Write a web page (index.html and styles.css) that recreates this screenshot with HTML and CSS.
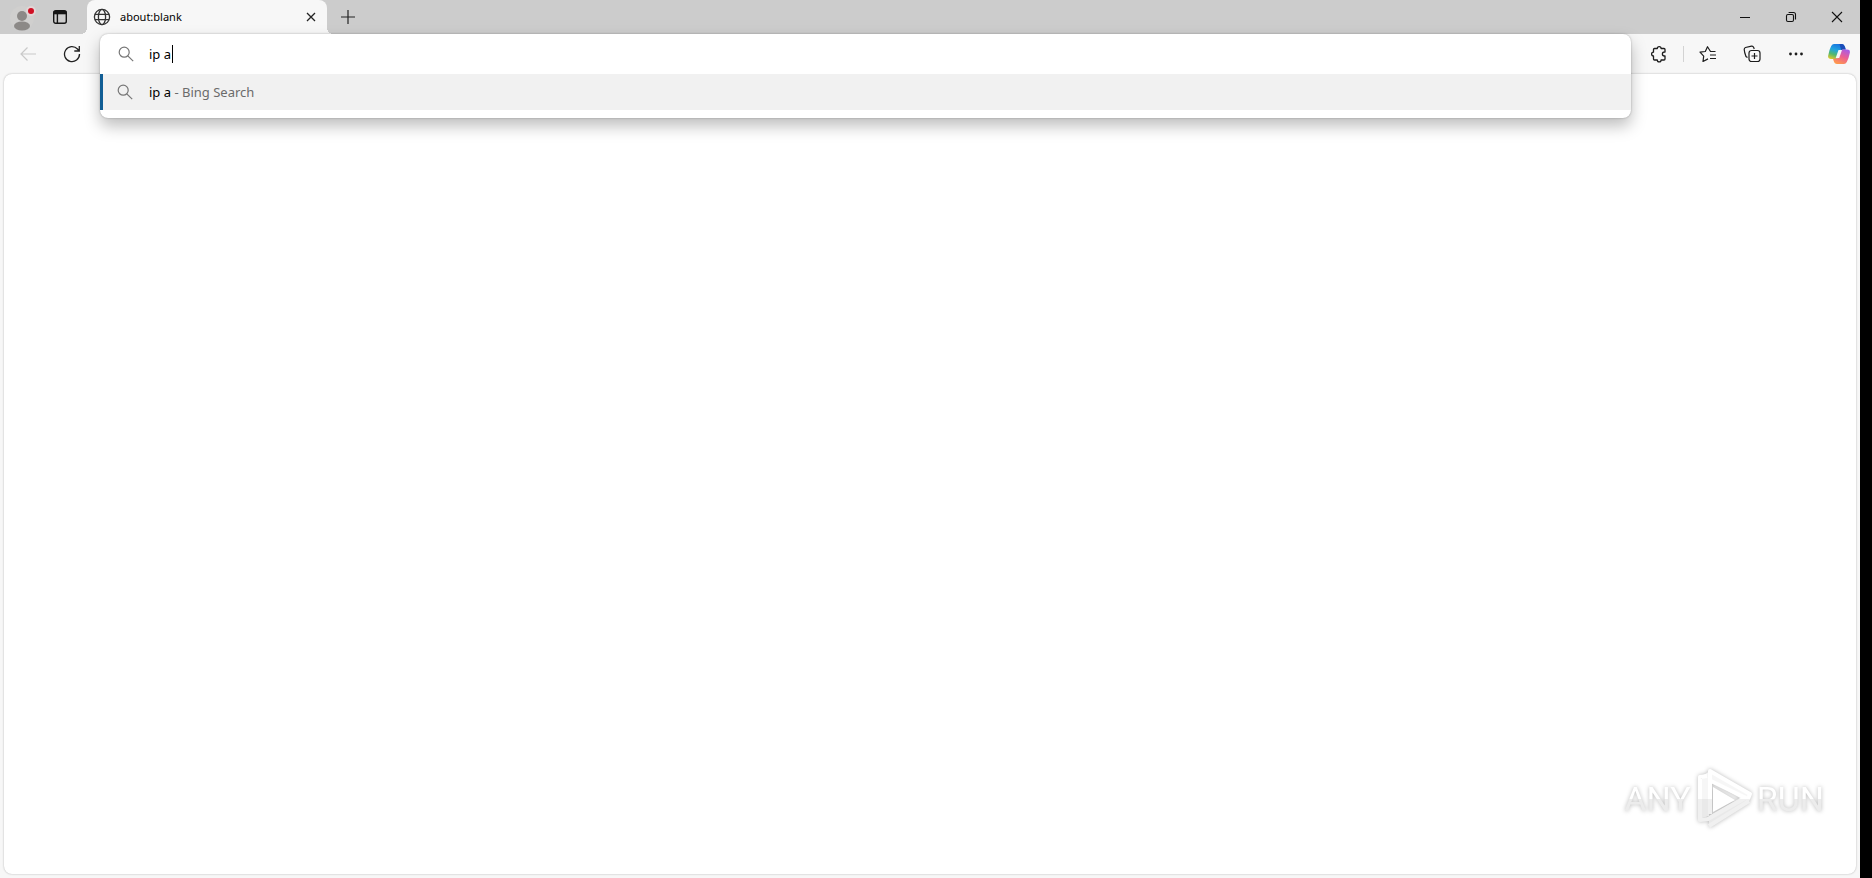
FILE: index.html
```html
<!DOCTYPE html>
<html lang="en">
<head>
<meta charset="utf-8">
<title>about:blank</title>
<link rel="stylesheet" href="styles.css">
</head>
<body>
<div class="window">
  <header class="tabstrip">
    <button class="profile" aria-label="Profile">
      <svg width="32" height="30" viewBox="0 0 32 30"><circle cx="16" cy="14" r="12" fill="#d0cfce"/><circle cx="16" cy="12" r="5" fill="#8c8987"/><ellipse cx="16" cy="22" rx="8" ry="4.500" fill="#8c8987"/><circle cx="25" cy="7" r="5" fill="#e2d5d5"/><circle cx="25" cy="7" r="3" fill="#d00f24"/></svg>
    </button>
    <button class="tab-actions" aria-label="Tab actions">
      <svg width="16" height="16" viewBox="0 0 16 16" fill="none" stroke="#151515" stroke-width="1.4"><rect x="1.7" y="1.7" width="12.6" height="12.6" rx="2"/><path d="M1.7 3.6h12.6" stroke-width="3.4"/><path d="M5.4 5v9"/></svg>
    </button>
    <div class="tab">
      <svg width="18" height="18" viewBox="0 0 18 18" fill="none" stroke="#333" stroke-width="1.3"><circle cx="9" cy="9" r="7.6"/><ellipse cx="9" cy="9" rx="3.6" ry="7.6"/><path d="M2 6.3h14M2 11.7h14"/></svg>
      <span class="tab-title">about:blank</span>
      <button class="tab-close" aria-label="Close tab"><svg width="10" height="10" viewBox="0 0 10 10" stroke="#222" stroke-width="1.3"><path d="M1 1l8 8M9 1L1 9"/></svg></button>
    </div>
    <button class="new-tab" aria-label="New tab"><svg width="14" height="14" viewBox="0 0 14 14" stroke="#222" stroke-width="1.2"><path d="M7 0v14M0 7h14"/></svg></button>
    <div class="window-controls">
      <button aria-label="Minimize"><svg width="12" height="12" viewBox="0 0 12 12" stroke="#111"><path d="M1 6.5h10"/></svg></button>
      <button aria-label="Restore"><svg width="12" height="12" viewBox="0 0 12 12" fill="none" stroke="#111" stroke-width="1.1"><rect x="1.5" y="3.5" width="7" height="7" rx="1.4"/><path d="M3.6 1.5h4.9a2 2 0 0 1 2 2v5"/></svg></button>
      <button aria-label="Close"><svg width="12" height="12" viewBox="0 0 12 12" stroke="#111" stroke-width="1.1"><path d="M1 1l10 10M11 1L1 11"/></svg></button>
    </div>
  </header>

  <nav class="toolbar">
    <button class="tool" aria-label="Back" disabled><svg width="18" height="16" viewBox="0 0 18 16" fill="none" stroke="#c9c9c9" stroke-width="1.2"><path d="M17 8H2M8.500 1.500L2 8l6.500 6.500"/></svg></button>
    <button class="tool" aria-label="Refresh"><svg width="18" height="18" viewBox="0 0 18 18" fill="none" stroke="#222" stroke-width="1.3"><path d="M16.500 9A7.500 7.500 0 1 1 14.500 4L16 5.700M16.300 1v5h-5"/></svg></button>
    <div class="address">
      <div class="popup">
        <label class="query">
          <svg width="16" height="16" viewBox="0 0 16 16" fill="none" stroke="#767676" stroke-width="1.2"><circle cx="6.200" cy="6.200" r="5"/><path d="M9.800 9.800l5.400 5.400"/></svg>
          <span class="field"><input type="text" value="ip a" aria-label="Address and search bar" spellcheck="false"><span class="caret"></span></span>
        </label>
        <button class="suggestion">
          <svg width="16" height="16" viewBox="0 0 16 16" fill="none" stroke="#767676" stroke-width="1.2"><circle cx="6.200" cy="6.200" r="5"/><path d="M9.800 9.800l5.400 5.400"/></svg>
          <span class="suggestion-text">ip a<span class="source"> - Bing Search</span></span>
        </button>
      </div>
    </div>
    <button class="tool" aria-label="Extensions"><svg width="18" height="18" viewBox="0 0 18 18" fill="none" stroke="#1c1c1c" stroke-width="1.3" stroke-linejoin="round"><path d="M4.500 3.500H7.300a1.900 1.900 0 0 1 3.800 0H14q1 0 1 1V7h-.6a2 2 0 0 0 0 4h.6v3q0 1-1 1h-2.900a1.900 1.900 0 0 1-3.800 0H4.500q-1 0-1-1V11a1.900 1.900 0 0 1 0-3.800V4.500q0-1 1-1z"/></svg></button>
    <span class="divider"></span>
    <button class="tool" aria-label="Favorites"><svg width="18" height="18" viewBox="0 0 18 18" fill="none" stroke="#1c1c1c" stroke-width="1.200" stroke-linejoin="round"><path d="M16.500 6.500h-5L8.500 1.700 6.300 6.500 1 7.200l3.700 3.900L4 16.500l5-2.600M11 10h6M11 13.500h6"/></svg></button>
    <button class="tool" aria-label="Collections"><svg width="18" height="18" viewBox="0 0 18 18" fill="none" stroke="#1c1c1c" stroke-width="1.200"><path d="M4.500 12.500L3 11.500Q1.300 7 1.200 4.500q0-1.500 1.300-2L8.500 1.200q1.500-.3 2.200 1.200l.5 1.600"/><rect x="6" y="5.500" width="11" height="11" rx="2.500"/><path d="M11.500 8v6M8.500 11h6"/></svg></button>
    <button class="tool" aria-label="Settings and more"><svg width="14" height="4" viewBox="0 0 14 4" fill="#1c1c1c"><circle cx="1.500" cy="2" r="1.400"/><circle cx="7" cy="2" r="1.400"/><circle cx="12.500" cy="2" r="1.400"/></svg></button>
    <button class="tool copilot" aria-label="Copilot">
      <svg width="22" height="20" viewBox="0 0 22 20">
        <defs>
          <linearGradient id="cool" x1=".6" y1="0" x2=".2" y2="1"><stop offset="0" stop-color="#1971df"/><stop offset=".4" stop-color="#20a4df"/><stop offset=".7" stop-color="#52b86f"/><stop offset="1" stop-color="#ddc72c"/></linearGradient>
          <linearGradient id="warm" x1=".8" y1="0" x2=".3" y2="1"><stop offset="0" stop-color="#a75be8"/><stop offset=".5" stop-color="#ed5f91"/><stop offset="1" stop-color="#ff9b4b"/></linearGradient>
        </defs>
        <path d="M6 0h8q2 0 3 3l.7 2.500H15q-2 0-2.700 2.200L10.500 13q-.8 2-3 2H3q-3.500 0-2.800-3.500Q1.500 5 3.200 2 4.300 0 6 0z" fill="url(#cool)"/>
        <path d="M11.500 0H14q2 0 3 3l.7 2.500H15q-1 0-1.800.8z" fill="#1b4db8"/>
        <path d="M16 20H9q-2.500 0-3.300-3L5 14.800h2.500q2.200 0 3-2l1.800-5.100Q13 5.500 15 5.500h4q3.500 0 2.800 3.500-1.200 6-3 9-1 2-2.800 2z" fill="url(#warm)"/>
        <path d="M10.500 6h3.500l-2.800 8H7.700z" fill="#f5f7fa"/>
      </svg>
    </button>
  </nav>

  <main class="page">
    <div class="watermark">
      <span>ANY</span>
      <svg width="66" height="66" viewBox="0 0 66 66" fill="none" stroke-width="4" stroke-linejoin="round">
        <defs>
          <linearGradient id="mark" gradientUnits="userSpaceOnUse" x1="0" y1="0" x2="0" y2="66"><stop offset=".5" stop-color="#fff"/><stop offset=".5" stop-color="#f0f0f0"/></linearGradient>
          <linearGradient id="band" gradientUnits="userSpaceOnUse" x1="0" y1="0" x2="0" y2="66"><stop offset=".5" stop-color="#f6f6f6"/><stop offset=".5" stop-color="#e9e9e9"/></linearGradient>
        </defs>
        <path d="M11 10v42l7-2V14l31 18-31 18v9l41-25v-6L19 5z" fill="url(#band)"/>
        <path d="M19 48V5l40 23-2 5-37-18M16 10l-7 1v43l8-1 39-22M18 60l40-25" stroke="url(#mark)"/>
        <path d="M22 21v25l22-12z" fill="#fff"/>
      </svg>
      <span>RUN</span>
    </div>
  </main>
</div>
</body>
</html>
```
FILE: styles.css
```css
* { box-sizing: border-box; }

body {
  margin: 0;
  min-height: 100vh;
  display: flex;
  background: #000;
  padding-right: 12px;
  font-family: "Noto Sans", "Open Sans", sans-serif;
  color: #000;
}

button {
  display: flex;
  align-items: center;
  justify-content: center;
  border: 0;
  padding: 0;
  background: none;
  color: inherit;
  font: inherit;
}

svg { display: block; flex: none; }

.window {
  flex: 1;
  min-width: 0;
  display: flex;
  flex-direction: column;
  background: #f7f7f7;
}

.tabstrip {
  display: flex;
  height: 34px;
  background: #cccccc;
}

.profile { width: 44px; padding-top: 4px; }
.tab-actions { width: 32px; }

.tab {
  position: relative;
  display: flex;
  align-items: center;
  gap: 9px;
  width: 240px;
  margin-left: 11px;
  padding: 0 8px 0 6px;
  border-radius: 8px 8px 0 0;
  background: #f7f7f7;
}

.tab::before,
.tab::after {
  content: "";
  position: absolute;
  bottom: 0;
  width: 6px;
  height: 6px;
}

.tab::before {
  right: 100%;
  background: radial-gradient(circle at 0 0, #cccccc 6px, #f7f7f7 6px);
}

.tab::after {
  left: 100%;
  background: radial-gradient(circle at 100% 0, #cccccc 6px, #f7f7f7 6px);
}

.tab-title { flex: 1; font-size: 11px; line-height: 16px; }
.tab-close { width: 16px; height: 16px; }
.new-tab { width: 42px; }

.window-controls { display: flex; margin-left: auto; }
.window-controls button { width: 46px; }

.toolbar {
  display: flex;
  align-items: center;
  height: 40px;
  padding-left: 6px;
}

.tool { width: 44px; height: 40px; }
.copilot { width: 42px; }

.divider {
  width: 1px;
  height: 16px;
  margin: 0 2px;
  background: #d3d3d3;
}

.address {
  position: relative;
  flex: 1;
  align-self: stretch;
  margin: 0 6px;
}

.popup {
  position: absolute;
  z-index: 2;
  top: 0;
  left: 0;
  right: 0;
  padding-bottom: 8px;
  border-radius: 8px;
  background: #fff;
  box-shadow: 0 0 2px rgba(0, 0, 0, .3), 0 8px 16px rgba(0, 0, 0, .26);
  font-size: 13px;
  line-height: 20px;
}

.query,
.suggestion {
  display: flex;
  align-items: center;
  gap: 15px;
  width: 100%;
  padding-left: 18px;
}

.query { height: 40px; }

.suggestion {
  justify-content: flex-start;
  gap: 16px;
  height: 36px;
  padding-left: 14px;
  border-left: 3px solid #115e95;
  background: #f1f1f1;
}

.field { position: relative; flex: 1; display: flex; }

.field input {
  width: 100%;
  border: 0;
  padding: 0;
  outline: 0;
  background: none;
  color: #000;
  font: inherit;
}

.caret {
  position: absolute;
  top: 1px;
  left: 23px;
  width: 1px;
  height: 18px;
  background: #000;
}

.suggestion-text { white-space: pre; }
.source { color: #6b6b6b; }

.page {
  flex: 1;
  display: flex;
  align-items: flex-end;
  justify-content: flex-end;
  margin: 0 4px 4px;
  padding: 0 32px 42px;
  border-radius: 8px;
  background: #fff;
  box-shadow: 0 0 2px rgba(0, 0, 0, .3);
}

.watermark {
  display: flex;
  align-items: center;
  font-family: Roboto, sans-serif;
  font-size: 34px;
  line-height: 40px;
  filter: drop-shadow(0 0 2px rgba(0, 0, 0, .28));
}

.watermark span {
  color: transparent;
  background: linear-gradient(#fff 50%, #ececec 50%);
  background-clip: text;
}
```
